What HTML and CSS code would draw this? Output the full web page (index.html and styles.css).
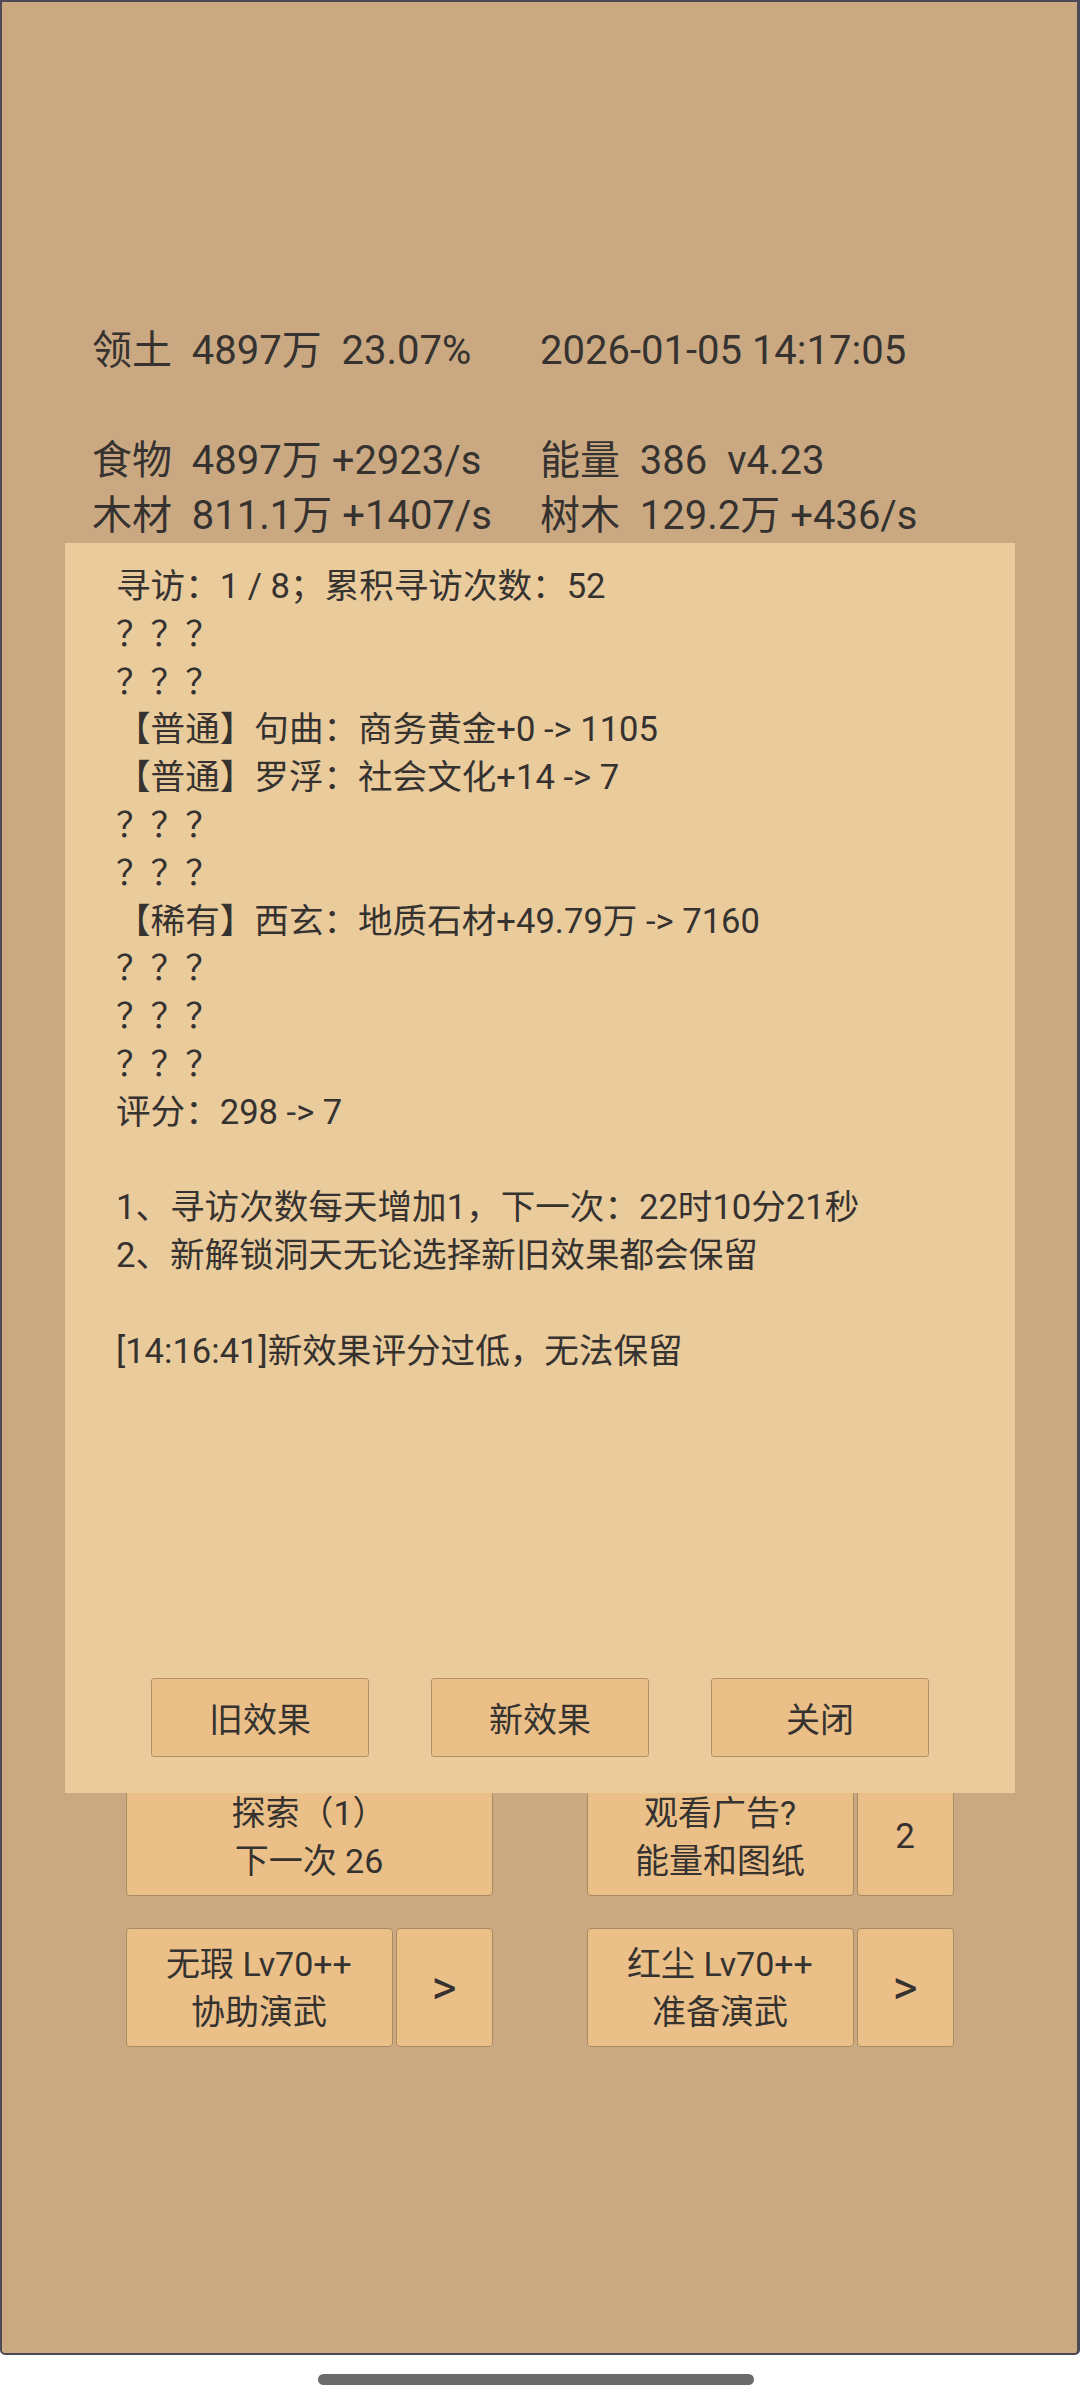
FILE: index.html
```html
<!DOCTYPE html>
<html lang="zh-CN">
<head>
<meta charset="utf-8">
<title>洞天寻访</title>
<link rel="stylesheet" href="styles.css">
</head>
<body>
<div class="frame">
  <div class="stats">
    <div class="cell">领土  4897万  23.07%</div>
    <div class="cell">2026-01-05 14:17:05</div>
    <div class="blank"></div>
    <div class="cell">食物  4897万 +2923/s</div>
    <div class="cell">能量  386  v4.23</div>
    <div class="cell">木材  811.1万 +1407/s</div>
    <div class="cell">树木  129.2万 +436/s</div>
  </div>

  <div class="actions">
    <div class="row">
      <div class="group">
        <div class="btn wide">探索（1）<br>下一次 26</div>
      </div>
      <div class="group">
        <div class="btn main">观看广告?<br>能量和图纸</div>
        <div class="btn small">2</div>
      </div>
    </div>
    <div class="row">
      <div class="group">
        <div class="btn main">无瑕 Lv70++<br>协助演武</div>
        <div class="btn small arrow">&gt;</div>
      </div>
      <div class="group">
        <div class="btn main">红尘 Lv70++<br>准备演武</div>
        <div class="btn small arrow">&gt;</div>
      </div>
    </div>
  </div>

  <div class="dialog">
    <div class="dialog-text">寻访：1 / 8；累积寻访次数：52
？？？
？？？
【普通】句曲：商务黄金+0 -> 1105
【普通】罗浮：社会文化+14 -> 7
？？？
？？？
【稀有】西玄：地质石材+49.79万 -> 7160
？？？
？？？
？？？
评分：298 -> 7

1、寻访次数每天增加1，下一次：22时10分21秒
2、新解锁洞天无论选择新旧效果都会保留

[14:16:41]新效果评分过低，无法保留</div>
    <div class="dialog-buttons">
      <div class="dbtn">旧效果</div>
      <div class="dbtn">新效果</div>
      <div class="dbtn">关闭</div>
    </div>
  </div>
</div>
<div class="homebar"></div>
</body>
</html>
```

FILE: styles.css
```css
html, body {
  margin: 0;
  padding: 0;
  background: #ffffff;
}

body {
  width: 1080px;
  font-family: Roboto, "Noto Sans CJK SC", sans-serif;
  color: #353230;
}

.frame {
  position: relative;
  box-sizing: border-box;
  width: 1080px;
  height: 2355px;
  background: #caa982;
  border: 2px solid #4c4a56;
  border-right-width: 3px;
  border-radius: 0 0 5px 5px;
  overflow: hidden;
}

.stats {
  display: grid;
  grid-template-columns: 448px 1fr;
  padding: 321px 0 0 90px;
  font-size: 40px;
  line-height: 55px;
}

.cell {
  white-space: pre;
}

.blank {
  grid-column: 1 / span 2;
  height: 55px;
}

.actions {
  margin-top: 1234px;
  display: flex;
  flex-direction: column;
  gap: 32px;
}

.row {
  display: flex;
  justify-content: center;
  gap: 94px;
}

.group {
  display: flex;
  gap: 3px;
  width: 367px;
}

.btn {
  box-sizing: border-box;
  height: 119px;
  display: flex;
  align-items: center;
  justify-content: center;
  text-align: center;
  background: #ebc088;
  border: 1px solid #a98b62;
  border-radius: 4px;
  font-size: 34px;
  line-height: 48px;
}

.btn.wide {
  width: 367px;
}

.btn.main {
  width: 267px;
}

.btn.small {
  width: 97px;
  font-size: 35px;
}

.btn.arrow {
  font-size: 48px;
}

.dialog {
  position: absolute;
  left: 63px;
  top: 541px;
  width: 950px;
  height: 1250px;
  box-sizing: border-box;
  background: #eacb9c;
  padding: 20px 0 36px 51px;
  display: flex;
  flex-direction: column;
}

.dialog-text {
  white-space: pre;
  font-size: 34.6px;
  line-height: 47.8px;
}

.dialog-buttons {
  margin-top: auto;
  display: flex;
  gap: 62px;
  padding-left: 35px;
}

.dbtn {
  box-sizing: border-box;
  width: 218px;
  height: 79px;
  display: flex;
  align-items: center;
  justify-content: center;
  background: #ebc088;
  border: 1px solid #b09066;
  border-radius: 3px;
  font-size: 34px;
}

.homebar {
  width: 436px;
  height: 11px;
  margin: 19px 0 0 318px;
  background: #6b6b6b;
  border-radius: 6px;
}
```
